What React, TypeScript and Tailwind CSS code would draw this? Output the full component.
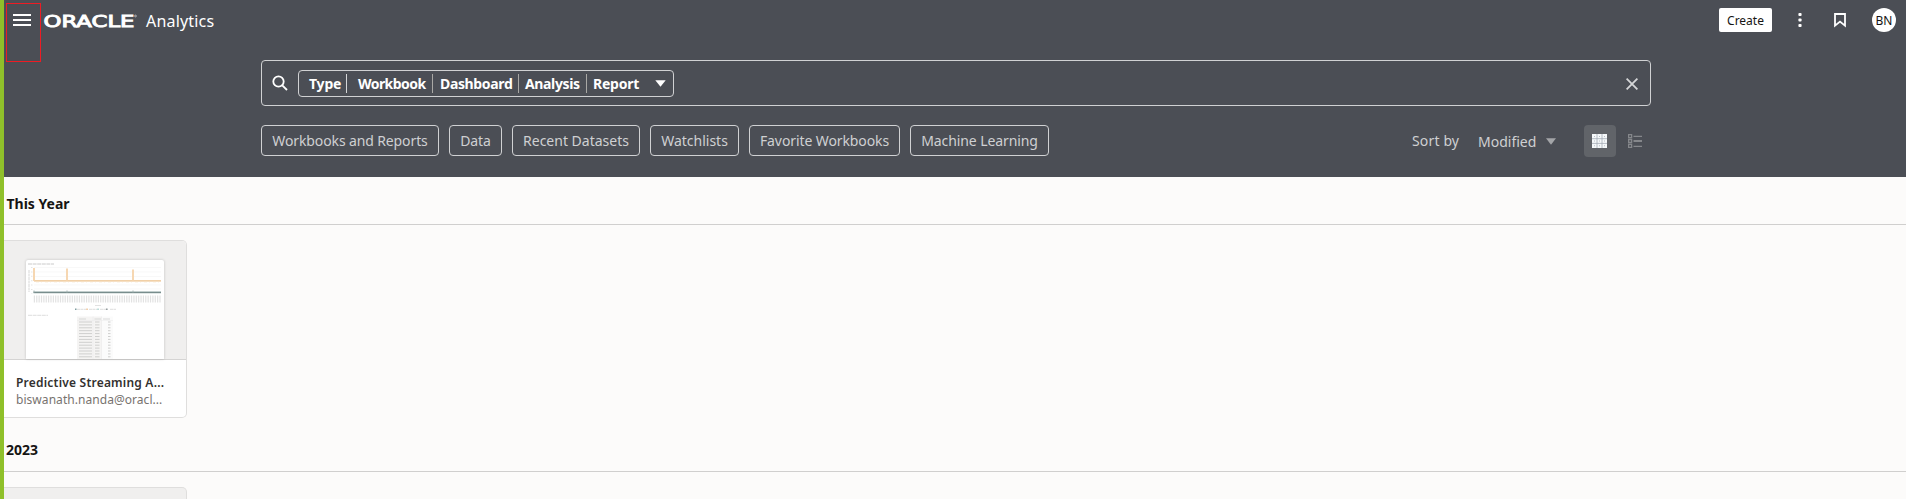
import React from 'react';

const filters = [
  { label: 'Workbooks and Reports', box: 'w-[178px]', text: 'tracking-[-0.12px]' },
  { label: 'Data', box: 'w-[53px]', text: 'tracking-[-0.1px]' },
  { label: 'Recent Datasets', box: 'w-[128px]', text: 'tracking-[0px]' },
  { label: 'Watchlists', box: 'w-[89px]', text: 'tracking-[0px]' },
  { label: 'Favorite Workbooks', box: 'w-[151px]', text: 'tracking-[-0.1px]' },
  { label: 'Machine Learning', box: 'w-[139px]', text: 'tracking-[-0.1px]' },
];

const types = [
  { label: 'Workbook', box: 'w-[86px] pl-[11px] tracking-[-0.55px]' },
  { label: 'Dashboard', box: 'w-[86px] pl-[7px] tracking-[-0.35px]' },
  { label: 'Analysis', box: 'w-[68px] pl-[6px] tracking-[-0.35px]' },
];

function OracleLogo() {
  return (
    <svg width="97" height="24" viewBox="-1 -4 97 24" className="ml-[11px] mr-[-1px] mt-[-4px] overflow-visible">
      <text x="0.5" y="14.5" fontFamily="DejaVu Sans, sans-serif" fontSize="15.5" fontWeight="400" fill="#fff" stroke="#fff" strokeWidth="0.9" textLength="91" lengthAdjust="spacingAndGlyphs">ORACLE</text>
      <circle cx="92.5" cy="4" r="0.9" fill="none" stroke="#fff" strokeWidth="0.5" />
    </svg>
  );
}

function Header() {
  return (
    <header className="flex h-[177px] flex-col bg-[#4b4e55] text-white">
      <div className="flex h-[60px] items-start justify-between">
        <div className="flex items-start pl-[9px] pt-[12px]">
          <svg width="18" height="14" viewBox="0 0 18 14" className="mt-[1px]" stroke="#fff" strokeWidth="2">
            <path d="M0 2h18M0 7h18M0 12h18" />
          </svg>
          <OracleLogo />
          <span className="ml-[8px] mt-[-3px] text-[16px] leading-[24px] tracking-[0.18px]">Analytics</span>
        </div>
        <div className="flex items-center pr-[10px] pt-[8px]">
          <button className="h-6 w-[53px] rounded-[2px] bg-white pt-px text-[12px] leading-[23px] text-[#161513]">Create</button>
          <svg width="6" height="16" viewBox="0 0 6 16" fill="#fff" className="ml-[25px]">
            <rect x="1.4" y="1" width="3.2" height="3" rx="1" />
            <rect x="1.4" y="6.6" width="3.2" height="3" rx="1" />
            <rect x="1.4" y="12" width="3.2" height="3" rx="1" />
          </svg>
          <svg width="12" height="16" viewBox="0 0 12 16" className="ml-[31px]" fill="none" stroke="#fff" strokeWidth="1.8">
            <path d="M1 2h10v11.6l-5-4-5 4z" />
          </svg>
          <div className="ml-[26px] flex size-6 items-center justify-center rounded-full bg-white pt-px text-[12px] text-[#161513]">BN</div>
        </div>
      </div>

      <div className="ml-[257px] flex h-[46px] w-[1390px] items-center rounded-[4px] border border-[#d0d1d3] pl-[10px] pr-[12px]">
        <svg width="16" height="16" viewBox="0 0 16 16" fill="none" stroke="#fff" strokeWidth="1.8">
          <circle cx="6.5" cy="6.5" r="5.2" />
          <path d="M10.3 10.3L15 15" />
        </svg>
        <div className="ml-[10px] flex h-[27px] w-[376px] items-center rounded-[4px] border border-[#d0d1d3] text-[14px] font-bold">
          <div className="flex h-[19px] w-[48px] items-center border-r border-[#d5d6d8] pl-[10px] tracking-[-0.2px]">Type</div>
          {types.map((t) => (
            <div key={t.label} className={'flex h-[19px] items-center border-r border-[#a9a8a5] ' + t.box}>{t.label}</div>
          ))}
          <div className="w-[68px] pl-[6px] tracking-[-0.25px]">Report</div>
          <svg width="11" height="7" viewBox="0 0 11 7" className="mt-px" fill="#fff"><path d="M0.3 0.2h10.4L5.5 6.8z" /></svg>
        </div>
        <svg width="12" height="12" viewBox="0 0 12 12" className="ml-auto mt-px" stroke="#d5d6d8" strokeWidth="1.8"><path d="M0.6 0.6l10.8 10.8M11.4 0.6L0.6 11.4" /></svg>
      </div>

      <div className="ml-[257px] mt-[19px] flex w-[1390px] items-start">
        <div className="flex gap-[10px]">
          {filters.map((f) => (
            <button key={f.label} className={'h-[31px] whitespace-nowrap rounded-[4px] border border-[#d0d1d3] text-[14px] text-[#cfd0d2] ' + f.box}>
              <span className={f.text}>{f.label}</span>
            </button>
          ))}
        </div>
        <div className="ml-auto flex h-8 items-center pr-[9px] text-[14px] text-[#cfd0d2]">
          <span className="w-[66px] pb-[2px] tracking-[0.15px]">Sort by</span>
          <span className="w-[68px]">Modified</span>
          <svg width="10" height="7" viewBox="0 0 10 7" fill="#a3a5a8"><path d="M0 0.2h10L5 6.8z" /></svg>
          <div className="ml-[28px] flex size-8 items-center rounded-[4px] bg-[#616469] pl-[8px]">
            <svg width="15" height="14" viewBox="0 0 15 14">
              <path d="M0 0h15v14H0z" fill="#f5f8fa" />
              <path d="M5 0v14M10 0v14M0 4.7h15M0 9.4h15" stroke="#a3abb5" strokeWidth="0.8" />
              <path d="M2 2h1v1h-1zM7 2h1v1h-1zM12 2h1v1h-1zM2 6.6h1v1h-1zM7 6.6h1v1h-1zM12 6.6h1v1h-1zM2 11.2h1v1h-1zM7 11.2h1v1h-1zM12 11.2h1v1h-1z" fill="#b9c0c6" />
            </svg>
          </div>
          <svg width="14" height="14" viewBox="0 0 14 14" className="ml-[12px]" fill="none" stroke="#85878b" strokeWidth="1.3">
            <path d="M0.6 0.6h3v3h-3zM0.6 5.5h3v3h-3zM0.6 10.4h3v3h-3zM5.5 2.3H14M5.5 12.3H14" />
            <path d="M5.5 7H14" strokeWidth="2" />
          </svg>
        </div>
      </div>
    </header>
  );
}

const ticks = Array.from({ length: 54 }, (_, i) => 7.8 + i * 2.37);
const rows = Array.from({ length: 14 }, (_, i) => 62 + i * 2.9);

function Thumbnail() {
  return (
    <svg width="138" height="99" viewBox="0 0 138 99" className="rounded-t-[2px] bg-white shadow-[0_0_3px_rgba(0,0,0,0.2)]">
      <path d="M2 4H28" stroke="#cacaca" strokeWidth="1" strokeDasharray="4 0.6" />
      <path d="M8 7.5H135M8 12H135M8 16.5H135M8 25H135M8 29H135" stroke="#f3f3f3" strokeWidth="0.6" />
      <path d="M3 10V32" stroke="#e6e6e6" strokeWidth="1.6" strokeDasharray="3 0.5" />
      <path d="M5.8 7V34" stroke="#dedede" strokeWidth="1.2" strokeDasharray="1 3.4" />
      <path d="M8 20.9H135" stroke="#ecc08a" strokeWidth="1.2" />
      <path d="M10 21.8H135" stroke="#f5dfc1" strokeWidth="0.8" strokeDasharray="3 2 1 3" />
      <path d="M8 8V21M41 8.5V21M107 9.5V21" stroke="#f5d3aa" strokeWidth="1.8" />
      <path d="M7.5 32.3H135" stroke="#c3cfce" strokeWidth="2.6" />
      <path d="M7.5 32.5H135" stroke="#788d8d" strokeWidth="1.1" />
      <path d="M8 30.5v2M41 30.5v2M107 30.5v2" stroke="#a5b5b5" strokeWidth="1" />
      {ticks.map((x) => (
        <rect key={x} x={x} y="35.5" width="1.2" height="7" fill="#e2e2e2" />
      ))}
      <path d="M69 45.5H75" stroke="#e2e2e2" strokeWidth="1.2" />
      <path d="M51 49.3H60M63 49.3H71M74 49.3H82M84 49.3H90" stroke="#dadada" strokeWidth="0.9" strokeDasharray="3 0.4" />
      <path d="M49 48.5h1.5v1.6h-1.5z" fill="#7f9da0" />
      <path d="M60.3 48.5h1.5v1.6h-1.5z" fill="#efc293" />
      <path d="M71.3 48.5h1.5v1.6h-1.5z" fill="#a9d3cf" />
      <path d="M80 48.5h1.5v1.6h-1.5z" fill="#949ea0" />
      <path d="M2 55.3H22" stroke="#dadada" strokeWidth="0.9" strokeDasharray="4 0.6" />
      <path d="M51 56.5h25v43h-25z" fill="#f5f4f3" />
      <path d="M76 56.5h11v43h-11z" fill="#fbfbfb" />
      <path d="M53 59H60M68.5 59H75M77 59H84" stroke="#d5d5d5" strokeWidth="0.9" />
      {rows.map((y) => (
        <path key={y} d={`M53 ${y}H66M69 ${y}H73.5M82 ${y}H84.5`} stroke="#cfcfce" strokeWidth="1" />
      ))}
      <path d="M51 60.5H87M67 56.5V99M75.5 56.5V99" stroke="#ebebea" strokeWidth="0.5" />
    </svg>
  );
}

export default function App() {
  return (
    <div className="relative h-[499px] w-[1906px] overflow-hidden border-l-4 border-[#8fc02a] bg-[#fcfbfa] font-['Noto_Sans','Open_Sans',sans-serif] text-[#161513]">
      <Header />
      <main>
        <h2 className="flex h-[48px] items-center border-b border-[#d0cfce] pl-[2.5px] pt-[5px] text-[14px] font-bold">This Year</h2>
        <article className="mt-[15px] flex h-[178px] w-[183px] flex-col overflow-hidden rounded-r-[5px] border border-l-0 border-[#dfdedd] bg-white">
          <div className="flex h-[119px] items-end border-b border-[#d5d4d3] bg-[#f0efee] pl-[22px]">
            <Thumbnail />
          </div>
          <h3 className="mt-[14px] whitespace-nowrap pl-[12px] text-[12px] font-semibold leading-[18px] tracking-[0.21px] text-[#33312f]">Predictive Streaming A...</h3>
          <p className="mt-[-1px] whitespace-nowrap pl-[12px] text-[12px] leading-[17px] tracking-[0.05px] text-[#78736f]">biswanath.nanda@oracl...</p>
        </article>
        <h2 className="flex h-[54px] items-center border-b border-[#d0cfce] pl-[2px] pt-[10px] text-[14px] font-bold">2023</h2>
        <article className="mt-[15px] h-[178px] w-[183px] rounded-r-[5px] border border-l-0 border-[#dfdedd] bg-[#f0efee]" />
      </main>
      <div className="absolute left-[2px] top-[3px] h-[59px] w-[35px] border border-[#ed1c24]" />
    </div>
  );
}
